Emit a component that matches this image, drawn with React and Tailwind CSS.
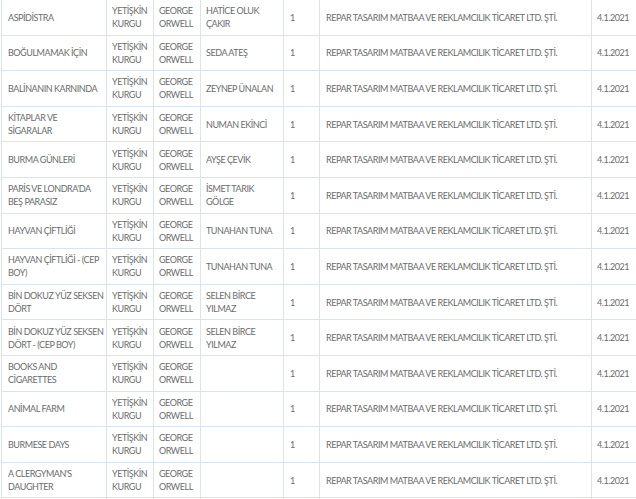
import React from "react";

const cell = "border border-[#dbe4ea] pl-[5px] pr-[2px] align-middle whitespace-nowrap overflow-hidden";

const Row = ({ title, translator }) => (
  <tr className="h-[35.6px]">
    <td className={cell + " pl-[6px]"}>{title}</td>
    <td className={cell}>
      YETİŞKİN
      <br />
      KURGU
    </td>
    <td className={cell}>
      GEORGE
      <br />
      ORWELL
    </td>
    <td className={cell}>{translator}</td>
    <td className={cell + " pl-[6px]"}>1</td>
    <td className={cell + " pl-[6px]"}>REPAR TASARIM MATBAA VE REKLAMCILIK TİCARET LTD. ŞTİ.</td>
    <td className={cell + " pl-[2px]"}>4.1.2021</td>
  </tr>
);

// next row is cut off by the viewport, only its top border shows
const EmptyRow = () => (
  <tr className="h-[35.6px]">
    {[0, 1, 2, 3, 4, 5, 6].map((i) => (
      <td key={i} className={cell}></td>
    ))}
  </tr>
);

const App = () => {
  return (
    <div
      className="w-[636px] h-[499px] overflow-hidden bg-white"
      style={{ fontFamily: 'Lato, "Noto Sans", sans-serif' }}
    >
      <table className="-mt-px ml-px border-collapse table-fixed w-[700px] uppercase text-[9px] leading-[13px] tracking-[-0.45px] text-[#6c6c6c]">
        <colgroup>
          <col className="w-[105px]" />
          <col className="w-[47px]" />
          <col className="w-[47px]" />
          <col className="w-[83px]" />
          <col className="w-[36px]" />
          <col className="w-[272px]" />
          <col className="w-[110px]" />
        </colgroup>
        <tbody>
          <Row title={<>ASPİDİSTRA</>} translator={<>HATİCE OLUK<br />ÇAKIR</>} />
          <Row title={<>BOĞULMAMAK İÇİN</>} translator={<>SEDA ATEŞ</>} />
          <Row title={<>BALİNANIN KARNINDA</>} translator={<>ZEYNEP ÜNALAN</>} />
          <Row title={<>KİTAPLAR VE<br />SİGARALAR</>} translator={<>NUMAN EKİNCİ</>} />
          <Row title={<>BURMA GÜNLERİ</>} translator={<>AYŞE ÇEVİK</>} />
          <Row title={<>PARİS VE LONDRA'DA<br />BEŞ PARASIZ</>} translator={<>İSMET TARIK<br />GÖLGE</>} />
          <Row title={<>HAYVAN ÇİFTLİĞİ</>} translator={<>TUNAHAN TUNA</>} />
          <Row title={<>HAYVAN ÇİFTLİĞİ - (CEP<br />BOY)</>} translator={<>TUNAHAN TUNA</>} />
          <Row title={<>BİN DOKUZ YÜZ SEKSEN<br />DÖRT</>} translator={<>SELEN BİRCE<br />YILMAZ</>} />
          <Row title={<>BİN DOKUZ YÜZ SEKSEN<br />DÖRT - (CEP BOY)</>} translator={<>SELEN BİRCE<br />YILMAZ</>} />
          <Row title={<>BOOKS AND<br />CİGARETTES</>} translator={null} />
          <Row title={<>ANİMAL FARM</>} translator={null} />
          <Row title={<>BURMESE DAYS</>} translator={null} />
          <Row title={<>A CLERGYMAN'S<br />DAUGHTER</>} translator={null} />
          <EmptyRow />
        </tbody>
      </table>
    </div>
  );
};

export default App;
